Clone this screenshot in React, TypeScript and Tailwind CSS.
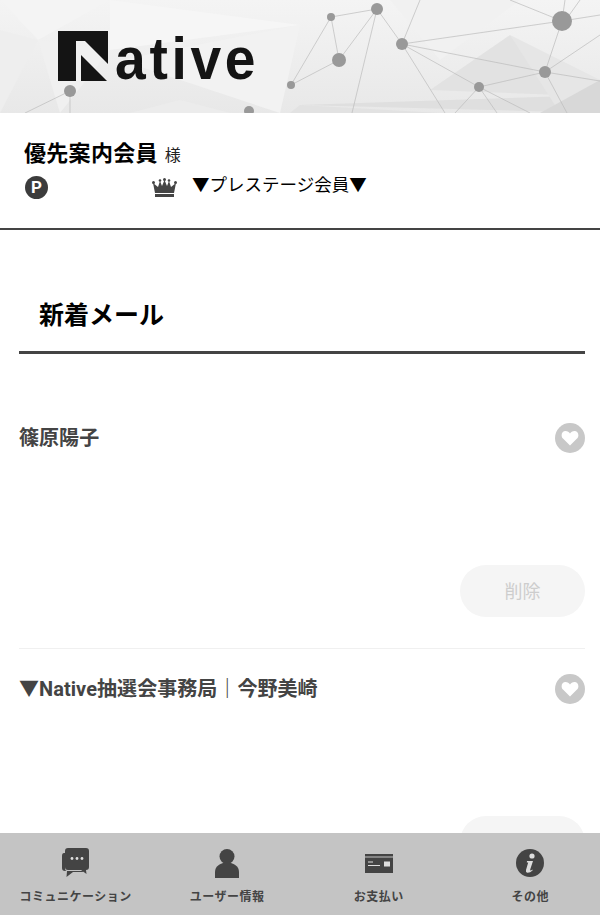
import React from 'react';

const jp = { fontFamily: 'Roboto, "Noto Sans CJK JP", "Noto Sans", sans-serif' };

const nodes = [
  [331, 17, 4],
  [377, 9, 6],
  [339, 60, 7],
  [291, 85, 4],
  [402, 44, 6],
  [562, 21, 10],
  [545, 72, 6],
  [479, 87, 5],
  [70, 91, 6],
  [249, 111, 5],
];

const links = [
  [331, 17, 377, 9],
  [331, 17, 339, 60],
  [331, 17, 291, 85],
  [377, 9, 339, 60],
  [339, 60, 291, 85],
  [377, 9, 402, 44],
  [402, 44, 420, 0],
  [402, 44, 562, 21],
  [402, 44, 545, 72],
  [402, 44, 479, 87],
  [402, 44, 445, 113],
  [562, 21, 545, 72],
  [562, 21, 600, 15],
  [562, 21, 510, 0],
  [562, 21, 565, 0],
  [565, 21, 580, 0],
  [545, 72, 479, 87],
  [545, 72, 600, 35],
  [545, 72, 600, 81],
  [545, 72, 567, 113],
  [479, 87, 455, 113],
  [479, 87, 497, 113],
  [479, 87, 530, 113],
  [377, 9, 352, 113],
  [70, 91, 25, 113],
  [70, 91, 70, 113],
  [249, 111, 245, 113],
];

const facets = [
  ['0,0 110,0 38,40', '#f4f4f4'],
  ['110,0 300,25 110,50', '#f6f6f6'],
  ['0,30 38,40 0,113', '#eeeeee'],
  ['38,40 110,50 60,113', '#f0f0f0'],
  ['300,25 120,60 280,113', '#f2f2f2'],
  ['180,100 230,113 130,113', '#ececec'],
  ['300,105 440,113 290,113', '#e2e2e2'],
  ['430,90 510,35 560,95', '#e2e2e2'],
  ['300,105 600,95 600,113', '#dfdfdf'],
  ['510,35 600,80 560,113', '#e6e6e6'],
  ['390,0 520,0 440,60', '#f1f1f1'],
  ['540,113 600,80 600,113', '#d8d8d8'],
];

const HeartBadge = () => (
  <div className="w-[30px] h-[30px] rounded-full bg-[#c8c8c8] flex items-center justify-center shrink-0">
    <svg width="18" height="16" viewBox="0 0 18 16">
      <path d="M9 15.5 L2 8.6 C-0.6 5.8 0.6 1 4.6 1 C6.6 1 8 2 9 3.6 C10 2 11.4 1 13.4 1 C17.4 1 18.6 5.8 16 8.6 Z" fill="#fff" />
    </svg>
  </div>
);

const MailItem = ({ name }: { name: string }) => (
  <div className="border-b border-[#f0f0f0] h-[251px] pt-[25px] flex flex-col">
    <div className="flex items-center justify-between h-[30px]">
      <p className="text-[20px] font-bold text-[#444] leading-[30px] tracking-[0.05px]">{name}</p>
      <HeartBadge />
    </div>
    <div className="flex justify-end mt-[112px]">
      <button className="w-[125px] h-[52px] rounded-[26px] bg-[#f5f5f5] text-[18px] text-[#cdcdcd]">削除</button>
    </div>
  </div>
);

const navItems = [
  {
    label: 'コミュニケーション',
    icon: (
      <svg width="28" height="30" viewBox="0 0 28 30">
        <path d="M3 5 H2 Q0 5 0 8 V20 Q0 23 3 23 H5 L4.5 29 L11 24 H20 Q21 24 22 23 H5 Q3 23 3 20 Z" fill="#444" />
        <path d="M6 0 H24 Q27 0 27 3 V19 Q27 22 24 22 L24.5 26 L19 22 H6 Q3 22 3 19 V3 Q3 0 6 0 Z" fill="#444" />
        <circle cx="10" cy="10.5" r="1.4" fill="#ddd" />
        <circle cx="15" cy="10.5" r="1.4" fill="#ddd" />
        <circle cx="20" cy="10.5" r="1.4" fill="#ddd" />
      </svg>
    ),
  },
  {
    label: 'ユーザー情報',
    icon: (
      <svg width="24" height="29" viewBox="0 0 24 29">
        <circle cx="12" cy="7.5" r="7.5" fill="#444" />
        <path d="M0 29 V23 C0 17 5 15 8 14 H16 C19 15 24 17 24 23 V29 Z" fill="#444" />
      </svg>
    ),
  },
  {
    label: 'お支払い',
    icon: (
      <svg width="28" height="19" viewBox="0 0 28 19">
        <rect width="28" height="19" fill="#444" />
        <rect y="2.5" width="28" height="1" fill="#c4c4c4" />
        <rect x="3" y="7.5" width="5" height="1" fill="#ddd" />
        <rect x="3" y="11" width="12" height="1" fill="#ddd" />
        <rect x="19" y="7.5" width="6" height="5" fill="#ddd" />
      </svg>
    ),
  },
  {
    label: 'その他',
    icon: (
      <svg width="28" height="28" viewBox="0 0 28 28">
        <circle cx="14" cy="14" r="14" fill="#444" />
        <circle cx="16" cy="7" r="2.6" fill="#ddd" />
        <path d="M11 12 H17 L14.2 20.5 Q14 21.8 15 21.4 L16.4 20.6 L16.6 21.6 Q13.8 24 11.4 23.8 Q9.4 23.4 10 21 L12.2 13.6 L10.8 13.4 Z" fill="#ddd" />
      </svg>
    ),
  },
];

const App = () => {
  return (
    <div className="relative w-[600px] h-[915px] overflow-hidden bg-white" style={jp}>
      {/* header */}
      <header className="relative h-[113px] overflow-hidden bg-gradient-to-b from-[#f4f4f4] to-[#e8e8e8]">
        <svg className="absolute inset-0" width="600" height="113" viewBox="0 0 600 113">
          {facets.map(([points, fill]) => (
            <polygon key={points} points={points} fill={fill} />
          ))}
          {links.map(([x1, y1, x2, y2]) => (
            <line key={`${x1}-${y1}-${x2}-${y2}`} x1={x1} y1={y1} x2={x2} y2={y2} stroke="#bbb" strokeWidth="0.7" />
          ))}
          {nodes.map(([cx, cy, r]) => (
            <circle key={`${cx}-${cy}`} cx={cx} cy={cy} r={r} fill="#999" />
          ))}
        </svg>
        <div className="relative flex items-end gap-[7px] pl-[58px] pt-[31px]">
          <svg width="50" height="50" viewBox="0 0 50 50" className="shrink-0">
            <path d="M0 0 H50 V33 L27 10 H18 V50 H0 Z" fill="#141414" />
            <path d="M23 24 L49 50 H23 Z" fill="#141414" />
          </svg>
          <span
            className="text-[#141414] font-bold text-[60px] leading-[56px] h-[50px] tracking-[4px] origin-left scale-x-[0.92]"
            style={{ fontFamily: '"Liberation Sans", sans-serif' }}
          >
            ative
          </span>
        </div>
      </header>

      {/* member info */}
      <section className="h-[117px] border-b-2 border-[#444] pl-[24px] pt-[25px]">
        <div className="flex items-baseline gap-[7px] text-black">
          <span className="text-[22px] font-bold leading-[32px] tracking-[0.3px]">優先案内会員</span>
          <span className="text-[16px] leading-[32px] text-[#222]">様</span>
        </div>
        <div className="flex items-center h-[30px]">
          <div className="w-[23px] h-[23px] rounded-full bg-[#3c3c3c] flex items-center justify-center text-white text-[17px] font-bold leading-none ml-px">
            P
          </div>
          <svg width="25" height="19" viewBox="0 0 25 19" className="ml-[104px] mt-[1px]">
            <path d="M1 5 L6 9 L8 3 L10 8 L12.5 2 L15 8 L17 3 L19 9 L24 5 L22 15 H3 Z" fill="#444" />
            <circle cx="1.5" cy="4.5" r="1.5" fill="#444" />
            <circle cx="8" cy="2.5" r="1.3" fill="#444" />
            <circle cx="12.5" cy="1.5" r="1.5" fill="#444" />
            <circle cx="17" cy="2.5" r="1.3" fill="#444" />
            <circle cx="23.5" cy="4.5" r="1.5" fill="#444" />
            <rect x="3" y="16" width="19" height="3" fill="#444" />
          </svg>
          <span className="ml-[15px] text-[17.5px] leading-[24px] text-black -mt-[4px]">▼プレステージ会員▼</span>
        </div>
      </section>

      {/* mail list */}
      <main className="pl-[19px] pr-[15px]">
        <h2 className="h-[124px] border-b-[3px] border-[#444] pl-[20px] pt-[68px] text-[25px] font-bold leading-[36px] text-black">
          新着メール
        </h2>
        <div className="pt-[44px]">
          <MailItem name="篠原陽子" />
          <MailItem name="▼Native抽選会事務局｜今野美崎" />
        </div>
      </main>

      {/* bottom nav */}
      <nav className="absolute bottom-0 left-0 w-[606px] h-[82px] bg-[#c4c4c4] grid grid-cols-4">
        {navItems.map((item) => (
          <div key={item.label} className="flex flex-col items-center">
            <div className="h-[30px] mt-[15px] flex items-center justify-center">{item.icon}</div>
            <span className="mt-[10px] text-[12px] font-bold tracking-[0.5px] leading-[18px] text-[#444]">{item.label}</span>
          </div>
        ))}
      </nav>
    </div>
  );
};

export default App;
